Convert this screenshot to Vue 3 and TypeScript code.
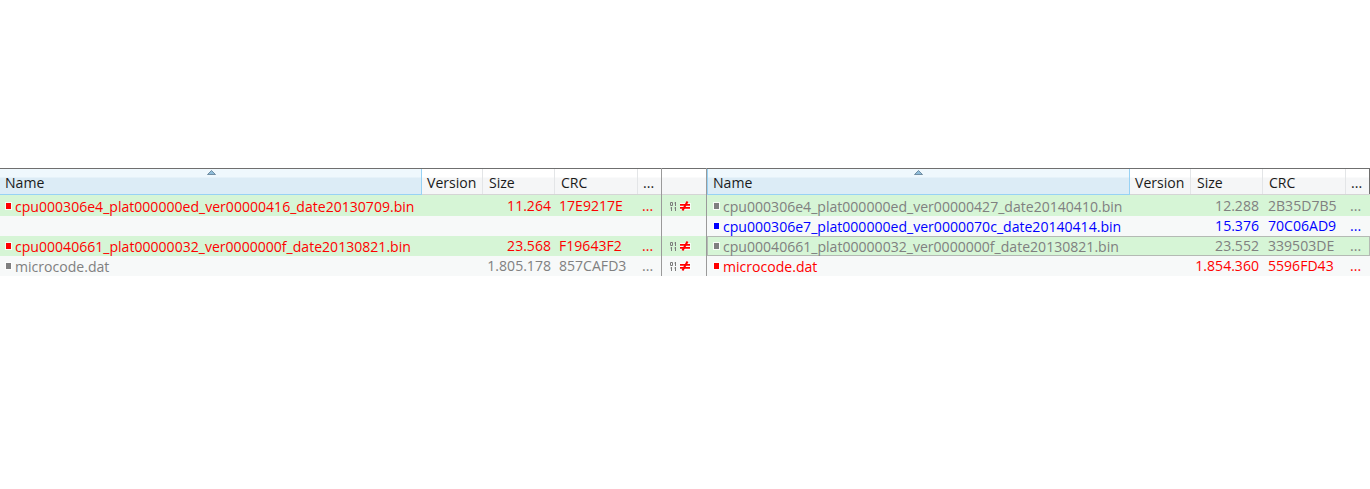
<script setup lang="ts">
type Row = { n: string; s: string; c: string; k: string; active?: boolean }
const leftRows: Row[] = [
  { n: 'cpu000306e4_plat000000ed_ver00000416_date20130709.bin', s: '11.264', c: '17E9217E', k: 'red' },
  { n: '', s: '', c: '', k: 'none' },
  { n: 'cpu00040661_plat00000032_ver0000000f_date20130821.bin', s: '23.568', c: 'F19643F2', k: 'red' },
  { n: 'microcode.dat', s: '1.805.178', c: '857CAFD3', k: 'grey' },
]
const rightRows: Row[] = [
  { n: 'cpu000306e4_plat000000ed_ver00000427_date20140410.bin', s: '12.288', c: '2B35D7B5', k: 'grey' },
  { n: 'cpu000306e7_plat000000ed_ver0000070c_date20140414.bin', s: '15.376', c: '70C06AD9', k: 'blue' },
  { n: 'cpu00040661_plat00000032_ver0000000f_date20130821.bin', s: '23.552', c: '339503DE', k: 'grey', active: true },
  { n: 'microcode.dat', s: '1.854.360', c: '5596FD43', k: 'red' },
]
const bands = ['g', 'w', 'g', 'w']
const marks = [true, false, true, true]
const panes = [
  { id: 'left', rows: leftRows },
  { id: 'right', rows: rightRows },
]
</script>

<template>
  <div class="page">
    <div class="compare">
      <section v-for="p in panes" :key="p.id" class="pane" :class="p.id">
        <div class="head">
          <div class="hc name"><svg class="sort" width="9" height="5" viewBox="0 0 9 5"><path d="M0.5 4.5 L4.5 0.5 L8.5 4.5 Z" fill="#8fbcd8" stroke="#4f6f86" stroke-width="0.7"/></svg>Name</div>
          <div class="hc ver">Version</div>
          <div class="hc size">Size</div>
          <div class="hc crc">CRC</div>
          <div class="hc more">...</div>
        </div>
        <div v-for="(r, i) in p.rows" :key="i" class="row" :class="[bands[i], r.k, { active: r.active }]">
          <div class="c name"><i v-if="r.n" class="dot"></i><span>{{ r.n }}</span></div>
          <div class="c ver"></div>
          <div class="c size">{{ r.s }}</div>
          <div class="c crc">{{ r.c }}</div>
          <div class="c more">{{ r.n ? '...' : '' }}</div>
        </div>
      </section>
      <section class="mid">
        <div class="mid-head"></div>
        <div v-for="(m, i) in marks" :key="i" class="mid-row" :class="bands[i]">
          <svg v-if="m" class="diff" width="21" height="10" viewBox="0 0 21 10">
            <g fill="none" stroke="#7c7c7c" stroke-width="1">
              <path d="M0.5 1.5h2v3h-2zM5.5 1v4M4.5 2h1M1.5 6v4M0.5 7h1M5.5 6v4M4.5 7h1" />
            </g>
            <path d="M10 2h11v7H10z" fill="#fff" opacity="0.75"/>
            <path d="M10 3h10v1.8H10zM10 6h10v1.8H10z" fill="#ff0000"/>
            <path d="M12.5 9.5L17.5 0.5" stroke="#ff0000" stroke-width="2"/>
          </svg>
        </div>
      </section>
    </div>
  </div>
</template>

<style>
html, body { margin: 0; background: #fff; }
</style>

<style scoped>
.page { height: 489px; padding-top: 168px; box-sizing: border-box; background: #fff; font-family: "Open Sans", sans-serif; font-size: 14.07px; overflow: hidden; }
.compare { display: grid; grid-template-columns: 662px 44px 1fr; height: 108px; }
.pane.right { order: 3; }
.mid { order: 2; }
.pane { min-width: 0; }
.head { display: flex; height: 27px; box-sizing: border-box; border-top: 1px solid #6f6f6f; border-bottom: 1px solid #d5d5d5; background: linear-gradient(#fff 0, #fff 8px, #f5f6f7 9px, #f5f6f7 100%); color: #1a1a1a; }
.hc { box-sizing: border-box; padding-left: 5px; line-height: 27px; border-right: 1px solid #e3e5e7; position: relative; white-space: nowrap; flex: none; }
.hc.name { background: linear-gradient(#eff8fd 0, #eff8fd 8px, #dcecf6 9px, #dcecf6 100%); border-right: 1px solid #98d2f4; border-bottom: 1px solid #98d2f4; height: 26px; }
.right .hc.name { border-left: 1px solid #98d2f4; }
.hc.size { padding-left: 6px; }
.hc.crc { padding-left: 6px; }
.sort { position: absolute; left: 207px; top: 1px; }
.right .sort { left: 206px; }
.name { width: 422px; flex: none; }
.right .name { width: 423px; }
.ver { width: 61px; flex: none; }
.size { width: 72px; flex: none; }
.crc { width: 83px; flex: none; }
.more { width: 24px; flex: none; }
.left { border-right: 1px solid #9a9a9a; box-sizing: border-box; }
.right { border-left: 1px solid #9a9a9a; box-sizing: border-box; }
.left .more { width: 23px; }
.left .hc.more { border-right: none; }
.right .hc.more { width: 24px; border-right: 1px solid #6f6f6f; }
.row { display: flex; height: 20px; line-height: 19px; box-sizing: border-box; }
.head + .row { height: 21px; padding-top: 1px; }
.g { background: #d6f5d6; }
.w { background: #f7f9f9; }
.c { box-sizing: border-box; white-space: nowrap; overflow: hidden; }
.c.name { display: flex; align-items: center; padding-left: 6px; }
.right .c.name { padding-left: 7px; }
.dot { width: 5px; height: 6px; margin: 0 4px 0 0; flex: none; background: currentColor; box-shadow: 0 0 0 1px rgba(255, 255, 255, 0.8); }
.c.size { text-align: right; padding-right: 4px; }
.c.crc { padding-left: 5px; }
.left .c.crc { padding-left: 4px; }
.c.more { padding-left: 4px; }
.red { color: #ff0000; }
.grey { color: #808080; }
.blue { color: #0000ff; }
.active { box-shadow: inset 0 0 0 1px #b4bab4; }
.mid-head { height: 27px; box-sizing: border-box; border-top: 1px solid #6f6f6f; border-bottom: 1px solid #d5d5d5; background: linear-gradient(#fff 0, #fff 8px, #f5f6f7 9px, #f5f6f7 100%); }
.mid-row { height: 20px; display: flex; align-items: center; padding-left: 8px; }
.mid-head + .mid-row { height: 21px; padding-top: 1px; box-sizing: border-box; }
</style>
